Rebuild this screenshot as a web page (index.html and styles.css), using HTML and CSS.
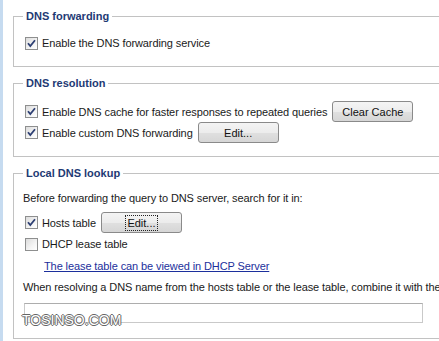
FILE: index.html
```html
<!DOCTYPE html>
<html>
<head>
<meta charset="utf-8">
<link rel="stylesheet" href="styles.css">
</head>
<body>
<div class="page">
  <div class="strip"></div>
  <main class="content">
    <fieldset class="group g1">
      <legend>DNS forwarding</legend>
      <label class="row"><span class="cb"><svg width="13" height="13" viewBox="0 0 13 13"><path d="M3 6.2 L5.3 9 L10 3.2" fill="none" stroke="#2d3f73" stroke-width="1.8"/></svg></span>Enable the DNS forwarding service</label>
    </fieldset>

    <fieldset class="group g2">
      <legend>DNS resolution</legend>
      <div class="row brow"><label class="lbl"><span class="cb"><svg width="13" height="13" viewBox="0 0 13 13"><path d="M3 6.2 L5.3 9 L10 3.2" fill="none" stroke="#2d3f73" stroke-width="1.8"/></svg></span>Enable DNS cache for faster responses to repeated queries</label><button class="btn">Clear Cache</button></div>
      <div class="row brow"><label class="lbl"><span class="cb"><svg width="13" height="13" viewBox="0 0 13 13"><path d="M3 6.2 L5.3 9 L10 3.2" fill="none" stroke="#2d3f73" stroke-width="1.8"/></svg></span>Enable custom DNS forwarding</label><button class="btn">Edit...</button></div>
    </fieldset>

    <fieldset class="group g3">
      <legend>Local DNS lookup</legend>
      <p class="text first">Before forwarding the query to DNS server, search for it in:</p>
      <div class="row brow hosts"><label class="lbl"><span class="cb"><svg width="13" height="13" viewBox="0 0 13 13"><path d="M3 6.2 L5.3 9 L10 3.2" fill="none" stroke="#2d3f73" stroke-width="1.8"/></svg></span>Hosts table</label><button class="btn"><span class="focus">Edit...</span></button></div>
      <label class="row dhcp"><span class="cb"></span>DHCP lease table</label>
      <a class="link" href="#">The lease table can be viewed in DHCP Server</a>
      <p class="text when">When resolving a DNS name from the hosts table or the lease table, combine it with the</p>
      <input class="field" type="text" value="">
    </fieldset>
  </main>
  <div class="watermark">TOSINSO.COM</div>
</div>
</body>
</html>
```
FILE: styles.css
```css
html, body {
  margin: 0;
  padding: 0;
  background: #ffffff;
  overflow: hidden;
}
body {
  font-family: "Liberation Sans", Arial, sans-serif;
  font-size: 11px;
  color: #1a1a1a;
}
.page {
  position: relative;
  display: flex;
  width: 439px;
  height: 341px;
}
.strip {
  flex: none;
  width: 3px;
  background: #c6dbf0;
}
.content {
  flex: 1;
  min-width: 0;
  display: flex;
  flex-direction: column;
  gap: 9px;
  padding: 9px 0 0 10px;
}
.group {
  margin: 0;
  min-width: 0;
  border: 1px solid #c2c2c2;
  border-right: none;
  padding: 12px 0 15px 9px;
}
.group legend {
  padding: 0 3px;
  font-weight: bold;
  font-size: 11px;
  line-height: 14px;
  color: #1e3a74;
}
.g2 { padding: 11px 0 13px 9px; }
.g3 { padding: 10px 0 15px 9px; }
.row {
  display: flex;
  align-items: center;
  height: 16px;
  white-space: nowrap;
  letter-spacing: -0.1px;
}
.lbl {
  display: flex;
  align-items: center;
}
.brow {
  height: 21px;
}
.cb {
  flex: none;
  width: 11px;
  height: 11px;
  margin: 0 4px 0 2px;
  border: 1px solid #8e8f8f;
  background: linear-gradient(135deg, #dcdcdc 0%, #f4f4f4 60%, #ffffff 100%);
  position: relative;
}
.cb svg {
  position: absolute;
  left: -1px;
  top: -1px;
}
.btn {
  flex: none;
  width: 81px;
  height: 21px;
  margin-left: 5px;
  padding: 0;
  border: 1px solid #8a8a8a;
  border-radius: 3px;
  background: linear-gradient(#f4f4f4 0%, #ececec 50%, #e0e0e0 51%, #d6d6d6 100%);
  font-family: "Liberation Sans", Arial, sans-serif;
  font-size: 11px;
  letter-spacing: 0;
  color: #111;
}
.focus {
  outline: 1px dotted #222;
  padding: 1px 1px;
}
.text {
  margin: 0;
  line-height: 16px;
  white-space: nowrap;
  letter-spacing: -0.1px;
}
.hosts { margin-top: 6px; }
.dhcp { margin-top: 3px; }
.link {
  display: block;
  margin: 6px 0 0 21px;
  line-height: 16px;
  color: #1c2f9c;
  text-decoration: underline;
  white-space: nowrap;
  letter-spacing: -0.1px;
}
.when { margin-top: 5px; }
.field {
  display: block;
  box-sizing: border-box;
  margin: 8px 0 0 1px;
  width: 399px;
  height: 20px;
  border: 1px solid #c9c9c9;
  border-top-color: #adadad;
  background: #fff;
}
.watermark {
  position: absolute;
  left: 22px;
  top: 312px;
  font-family: "Liberation Sans", Arial, sans-serif;
  font-size: 14px;
  color: #ffffff;
  text-shadow: -1px 0 #666, 1px 0 #666, 0 -1px #666, 0 1px #666;
}
```
